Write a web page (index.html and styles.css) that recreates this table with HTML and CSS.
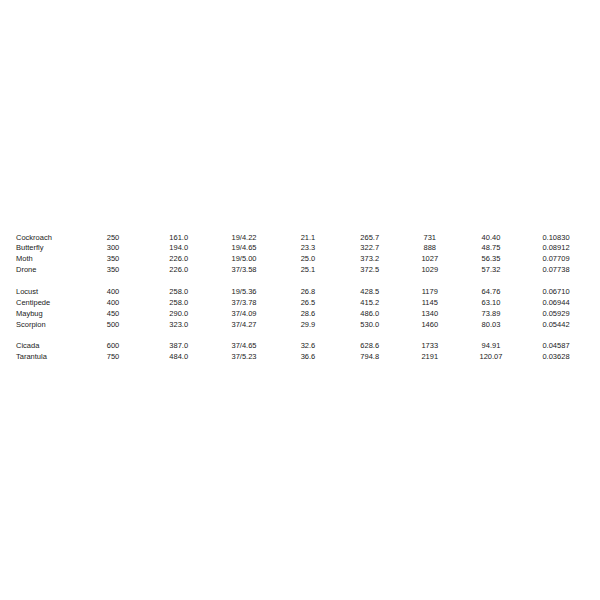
FILE: index.html
```html
<!DOCTYPE html>
<html>
<head>
<meta charset="utf-8">
<link rel="stylesheet" href="styles.css">
</head>
<body>
<div class="sheet">
  <div class="group">
    <div class="row"><span class="name">Cockroach</span><span>250</span><span>161.0</span><span>19/4.22</span><span>21.1</span><span>265.7</span><span>731</span><span>40.40</span><span>0.10830</span></div>
    <div class="row"><span class="name">Butterfly</span><span>300</span><span>194.0</span><span>19/4.65</span><span>23.3</span><span>322.7</span><span>888</span><span>48.75</span><span>0.08912</span></div>
    <div class="row"><span class="name">Moth</span><span>350</span><span>226.0</span><span>19/5.00</span><span>25.0</span><span>373.2</span><span>1027</span><span>56.35</span><span>0.07709</span></div>
    <div class="row"><span class="name">Drone</span><span>350</span><span>226.0</span><span>37/3.58</span><span>25.1</span><span>372.5</span><span>1029</span><span>57.32</span><span>0.07738</span></div>
  </div>
  <div class="group">
    <div class="row"><span class="name">Locust</span><span>400</span><span>258.0</span><span>19/5.36</span><span>26.8</span><span>428.5</span><span>1179</span><span>64.76</span><span>0.06710</span></div>
    <div class="row"><span class="name">Centipede</span><span>400</span><span>258.0</span><span>37/3.78</span><span>26.5</span><span>415.2</span><span>1145</span><span>63.10</span><span>0.06944</span></div>
    <div class="row"><span class="name">Maybug</span><span>450</span><span>290.0</span><span>37/4.09</span><span>28.6</span><span>486.0</span><span>1340</span><span>73.89</span><span>0.05929</span></div>
    <div class="row"><span class="name">Scorpion</span><span>500</span><span>323.0</span><span>37/4.27</span><span>29.9</span><span>530.0</span><span>1460</span><span>80.03</span><span>0.05442</span></div>
  </div>
  <div class="group">
    <div class="row"><span class="name">Cicada</span><span>600</span><span>387.0</span><span>37/4.65</span><span>32.6</span><span>628.6</span><span>1733</span><span>94.91</span><span>0.04587</span></div>
    <div class="row"><span class="name">Tarantula</span><span>750</span><span>484.0</span><span>37/5.23</span><span>36.6</span><span>794.8</span><span>2191</span><span>120.07</span><span>0.03628</span></div>
  </div>
</div>
</body>
</html>
```
FILE: styles.css
```css
html, body {
  margin: 0;
  padding: 0;
  background: #fff;
}
.sheet {
  padding: 232.5px 0 0 16px;
  font-family: "Liberation Sans", Arial, sans-serif;
  font-size: 7.5px;
  color: #222;
}
.group {
  margin-bottom: 10.9px;
}
.row {
  display: grid;
  grid-template-columns: 64px 66px 65.5px 65px 63px 60.5px 59.5px 63px 67px;
  height: 10.9px;
  line-height: 10.9px;
}
.row span {
  text-align: center;
  white-space: nowrap;
}
.row .name {
  text-align: left;
}
```
